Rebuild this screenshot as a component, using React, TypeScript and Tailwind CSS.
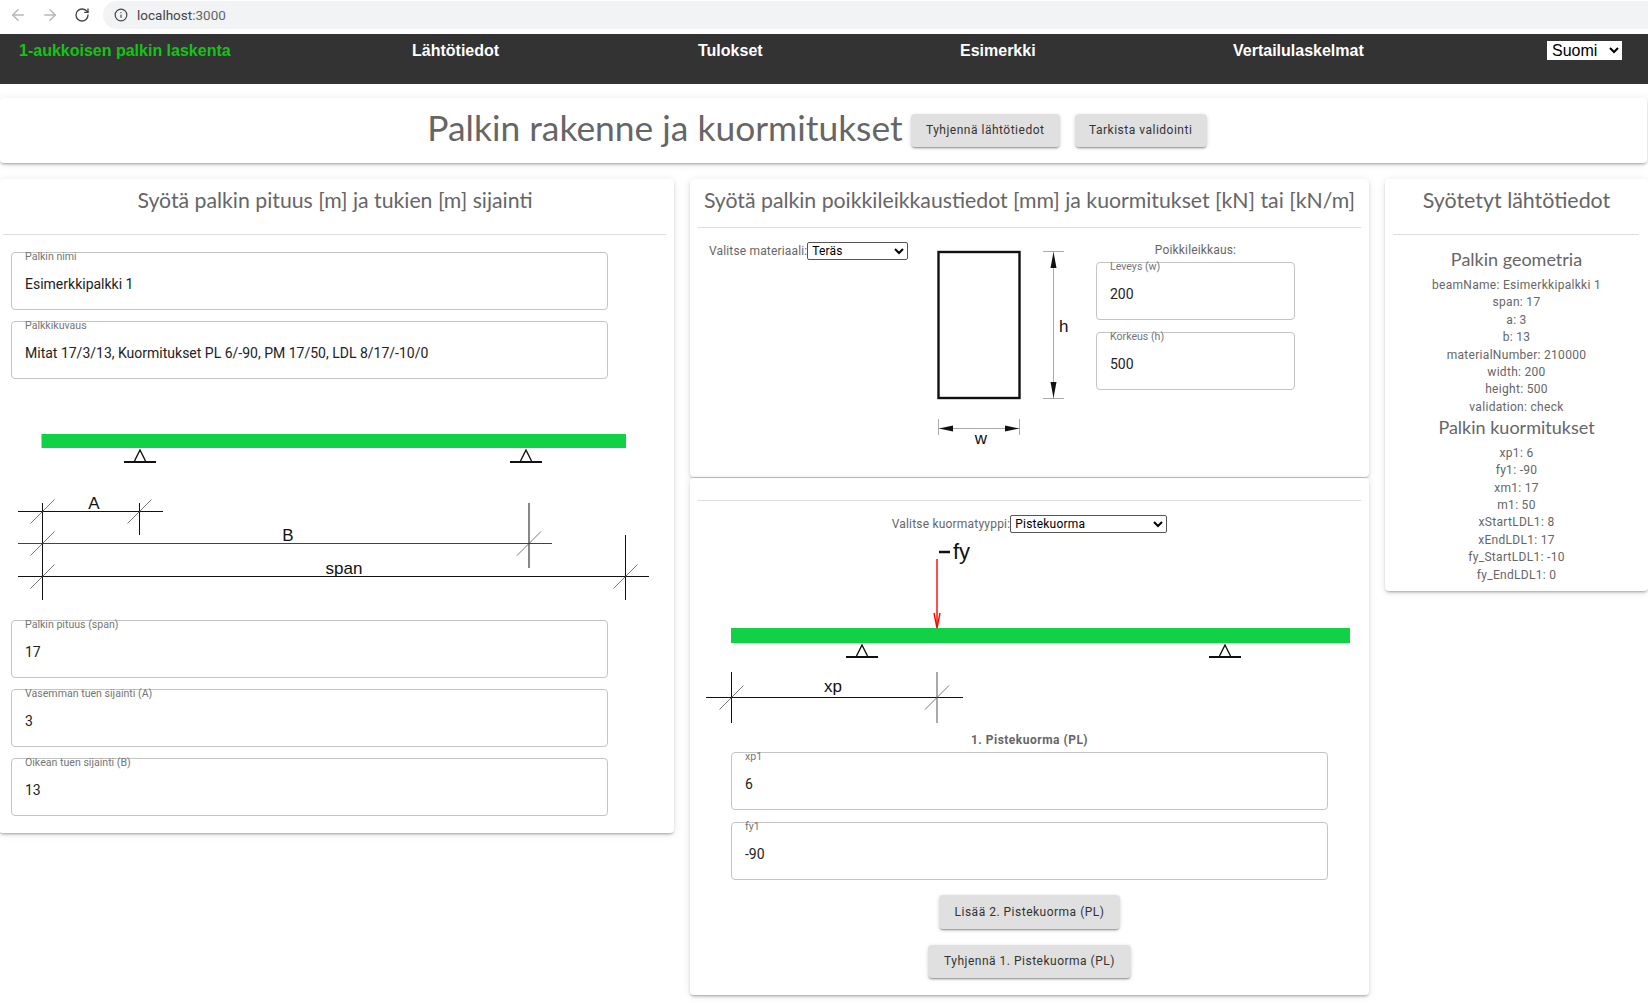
import { ArrowLeft, ArrowRight, Info, RotateCw } from "lucide-react";

const lato = "font-['Lato',sans-serif] text-[#666]";

function Field({ label, value, className }: { label: string; value: string; className: string }) {
  return (
    <div className={`relative h-[58px] rounded-[4px] border border-[#c4c4c4] ${className}`}>
      <span className="absolute left-[13px] top-[-3px] text-[10.6px] leading-[13px] text-[#757575]">{label}</span>
      <input
        readOnly
        defaultValue={value}
        className="h-full w-full bg-transparent pl-[13px] pt-[6px] text-[14px] text-[#222] outline-none"
      />
    </div>
  );
}

function GrayButton({ children, className = "" }: { children: string; className?: string }) {
  return (
    <button className={`rounded-[4px] bg-[#e0e0e0] text-[12px] tracking-[0.5px] text-[#333] shadow-[0_2px_2px_-1px_rgba(0,0,0,0.4),0_1px_4px_rgba(0,0,0,0.14)] ${className}`}>
      {children}
    </button>
  );
}

function Support({ x, y }: { x: number; y: number }) {
  return (
    <g fill="none" stroke="#111">
      <path d={`M${x - 5.5} ${y + 11} L${x} ${y} L${x + 5.5} ${y + 11}`} strokeWidth="1.4" />
      <path d={`M${x - 16} ${y + 12} H${x + 16}`} strokeWidth="2" />
    </g>
  );
}

function Tick({ x, y }: { x: number; y: number }) {
  return <path d={`M${x - 12} ${y + 12} L${x + 12} ${y - 12}`} stroke="#555" strokeWidth="0.8" fill="none" />;
}

function SpanDrawing() {
  return (
    <svg width="673" height="236" className="ml-px mt-[5px] block" style={{ fontFamily: "Liberation Sans" }}>
      {/* svg top = page y 384 */}
      <rect x="41.5" y="50" width="584.5" height="14" fill="#11d146" />
      <Support x={140} y={66} />
      <Support x={526} y={66} />
      <g stroke="#111" strokeWidth="1" fill="none">
        <path d="M18 127.5 H163" />
        <path d="M18 159.5 H552" stroke="#444" />
        <path d="M18 192.5 H649" />
        <path d="M42.5 119 V216" />
        <path d="M139.5 119 V151" />
        <path d="M529 119 V184" />
        <path d="M625.5 151 V216" />
      </g>
      <Tick x={42.5} y={127.5} />
      <Tick x={139.5} y={127.5} />
      <Tick x={42.5} y={159.5} />
      <Tick x={529} y={159.5} />
      <Tick x={42.5} y={192.5} />
      <Tick x={625.5} y={192.5} />
      <text x="94" y="125" fontSize="17" textAnchor="middle" fill="#111">A</text>
      <text x="288" y="157" fontSize="17" textAnchor="middle" fill="#111">B</text>
      <text x="344" y="190" fontSize="17" textAnchor="middle" fill="#111">span</text>
    </svg>
  );
}

function SectionDrawing() {
  return (
    <svg width="150" height="206" className="block shrink-0" style={{ fontFamily: "Liberation Sans" }}>
      {/* svg left = page x 930, top = page y 245 */}
      <rect x="8.5" y="7" width="81" height="146" fill="none" stroke="#111" strokeWidth="2.4" />
      <g stroke="#aaa" strokeWidth="1" fill="none">
        <path d="M123.5 6 V153" />
        <path d="M113 6.5 H134" />
        <path d="M113 153.5 H134" />
        <path d="M9 183.5 H89" />
        <path d="M8.5 174 V190" />
        <path d="M89.5 174 V190" />
      </g>
      <g fill="#111">
        <path d="M123.5 7 L120.5 23 H126.5 Z" />
        <path d="M123.5 153 L120.5 137 H126.5 Z" />
        <path d="M9 183.5 L23 180.5 V186.5 Z" />
        <path d="M89 183.5 L75 180.5 V186.5 Z" />
      </g>
      <text x="129" y="87" fontSize="17" fill="#111">h</text>
      <text x="51" y="199" fontSize="17" textAnchor="middle" fill="#111">w</text>
    </svg>
  );
}

function LoadDrawing() {
  return (
    <svg width="679" height="184" className="block" style={{ fontFamily: "Liberation Sans" }}>
      {/* svg left = page x 690, top = page y 540 */}
      <rect x="41" y="88" width="619" height="15" fill="#11d146" />
      <path d="M247 19 V87" stroke="#f00" strokeWidth="1.4" fill="none" />
      <path d="M244 73 L247 88 L250 73" stroke="#f00" strokeWidth="1.4" fill="none" />
      <Support x={172} y={105} />
      <Support x={535} y={105} />
      <path d="M249 12 H260" stroke="#111" strokeWidth="2.5" />
      <text x="263" y="19" fontSize="22" fill="#111">fy</text>
      <g stroke="#111" strokeWidth="1" fill="none">
        <path d="M16 157.5 H273" />
        <path d="M41.5 132 V183" />
        <path d="M247 132 V183" stroke="#555" />
      </g>
      <Tick x={41.5} y={157.5} />
      <Tick x={247} y={157.5} />
      <text x="143" y="152" fontSize="17" textAnchor="middle" fill="#111">xp</text>
    </svg>
  );
}

const geometry = [
  "beamName: Esimerkkipalkki 1",
  "span: 17",
  "a: 3",
  "b: 13",
  "materialNumber: 210000",
  "width: 200",
  "height: 500",
  "validation: check",
];

const loads = ["xp1: 6", "fy1: -90", "xm1: 17", "m1: 50", "xStartLDL1: 8", "xEndLDL1: 17", "fy_StartLDL1: -10", "fy_EndLDL1: 0"];

const cardClass = "rounded-[4px] bg-white shadow-[0_2px_3px_-1px_rgba(0,0,0,0.35),0_1px_8px_rgba(0,0,0,0.1)]";

export default function App() {
  return (
    <div className="h-[1003px] w-[1648px] overflow-hidden bg-white font-['Roboto',sans-serif]">
      <div className="flex h-[34px] items-start">
        <div className="flex h-[29px] w-[103px] items-center pl-[9px] text-[#b5b8bb]">
          <ArrowLeft size={18} />
          <ArrowRight size={18} className="ml-[14px]" />
          <RotateCw size={16} className="ml-[15px] text-[#444]" />
        </div>
        <div className="mt-px flex h-[28px] flex-1 items-center rounded-l-[14px] bg-[#f1f3f4] pl-[11px] text-[13.5px] text-[#444]">
          <Info size={14} />
          <span className="ml-[9px]">localhost<span className="text-[#666]">:3000</span></span>
        </div>
      </div>

      <nav className="flex h-[50px] items-start bg-[#333] pt-[7px] font-['Liberation_Sans',sans-serif] text-[16px] font-bold leading-[20px] text-white">
        <span className="ml-[19px] w-[393px] text-[#14c414]">1-aukkoisen palkin laskenta</span>
        <span className="w-[286px]">Lähtötiedot</span>
        <span className="w-[262px]">Tulokset</span>
        <span className="w-[273px]">Esimerkki</span>
        <span className="w-[314px]">Vertailulaskelmat</span>
        <select className="h-[19px] w-[75px] bg-white pl-px text-[16px] font-normal leading-[19px] text-black">
          <option>Suomi</option>
        </select>
      </nav>

      <header className={`mt-[14px] flex h-[65px] w-[1647px] items-center justify-center pr-[13px] ${cardClass}`}>
        <h1 className="mb-[6px] font-['Lato',sans-serif] text-[35.4px] leading-[44px] text-[#666]">Palkin rakenne ja kuormitukset</h1>
        <GrayButton className="-mt-px ml-2 h-[33px] w-[149px]">Tyhjennä lähtötiedot</GrayButton>
        <GrayButton className="-mt-px ml-[15px] h-[33px] w-[132px]">Tarkista validointi</GrayButton>
      </header>

      <main className="mt-4 flex items-start">
        <section className={`-ml-px h-[654px] w-[675px] ${cardClass}`}>
          <h2 className={`${lato} pr-[3px] pt-2 text-center text-[21.25px] leading-[26px]`}>Syötä palkin pituus [m] ja tukien [m] sijainti</h2>
          <hr className="ml-1 mt-[21px] w-[663px] border-[#ddd]" />
          <Field className="ml-3 mt-[16.5px] w-[597px]" label="Palkin nimi" value="Esimerkkipalkki 1" />
          <Field className="ml-3 mt-[11px] w-[597px]" label="Palkkikuvaus" value="Mitat 17/3/13, Kuormitukset PL 6/-90, PM 17/50, LDL 8/17/-10/0" />
          <SpanDrawing />
          <Field className="ml-3 w-[597px]" label="Palkin pituus (span)" value="17" />
          <Field className="ml-3 mt-[11px] w-[597px]" label="Vasemman tuen sijainti (A)" value="3" />
          <Field className="ml-3 mt-[11px] w-[597px]" label="Oikean tuen sijainti (B)" value="13" />
        </section>

        <div className="ml-4 w-[679px]">
          <section className={`h-[298px] ${cardClass}`}>
            <h2 className={`${lato} pt-2 text-center text-[21.25px] leading-[26px]`}>Syötä palkin poikkileikkaustiedot [mm] ja kuormitukset [kN] tai [kN/m]</h2>
            <hr className="ml-2 mt-[13.5px] w-[663px] border-[#ddd]" />
            <div className="flex items-start">
              <label className="ml-[19px] mt-[14px] flex w-[221px] shrink-0 items-center text-[12px] tracking-[0.16px] text-[#666]">
                Valitse materiaali:
                <select className="h-[18px] w-[101px] shrink-0 rounded-[2px] border border-[#555] bg-white text-[12px] text-black">
                  <option>Teräs</option>
                </select>
              </label>
              <div className="mt-[17px]">
                <SectionDrawing />
              </div>
              <div className="ml-4 mt-[14px] w-[199px]">
                <div className="text-center text-[12px] leading-[17px] tracking-[0.16px] text-[#666]">Poikkileikkaus:</div>
                <Field className="mt-[3px]" label="Leveys (w)" value="200" />
                <Field className="mt-3" label="Korkeus (h)" value="500" />
              </div>
            </div>
          </section>

          <section className={`mt-px h-[517px] ${cardClass}`}>
            <hr className="ml-2 w-[663px] translate-y-[22px] border-[#ddd]" />
            <label className="flex items-center justify-center pt-9 text-[12px] tracking-[0.2px] text-[#666]">
              Valitse kuormatyyppi:
              <select className="h-[18px] w-[157px] rounded-[2px] border border-[#555] bg-white text-[12px] text-black">
                <option>Pistekuorma</option>
              </select>
            </label>
            <div className="mt-[6.5px]">
              <LoadDrawing />
            </div>
            <div className="mt-2 text-center text-[12px] font-bold leading-[16px] tracking-[0.5px] text-[#666]">1. Pistekuorma (PL)</div>
            <Field className="ml-[41px] mt-1 w-[597px]" label="xp1" value="6" />
            <Field className="ml-[41px] mt-3 w-[597px]" label="fy1" value="-90" />
            <div className="mt-[15px] flex flex-col items-center gap-4">
              <GrayButton className="h-[34px] w-[181px]">Lisää 2. Pistekuorma (PL)</GrayButton>
              <GrayButton className="h-[33px] w-[203px]">Tyhjennä 1. Pistekuorma (PL)</GrayButton>
            </div>
          </section>
        </div>

        <aside className={`ml-4 h-[412px] w-[263px] text-center ${cardClass}`}>
          <h2 className={`${lato} pt-2 text-[21.4px] leading-[26px]`}>Syötetyt lähtötiedot</h2>
          <hr className="ml-2 mt-[21px] w-[246px] border-[#ddd]" />
          <h3 className={`${lato} mt-[13px] text-[18px] leading-[22px]`}>Palkin geometria</h3>
          <div className="mt-[7px] text-[12px] leading-[17.4px] tracking-[0.3px] text-[#666]">
            {geometry.map((line) => (
              <div key={line}>{line}</div>
            ))}
          </div>
          <h3 className={`${lato} text-[18px] leading-[22px]`}>Palkin kuormitukset</h3>
          <div className="mt-[6.5px] text-[12px] leading-[17.4px] tracking-[0.3px] text-[#666]">
            {loads.map((line) => (
              <div key={line}>{line}</div>
            ))}
          </div>
        </aside>
      </main>
    </div>
  );
}
